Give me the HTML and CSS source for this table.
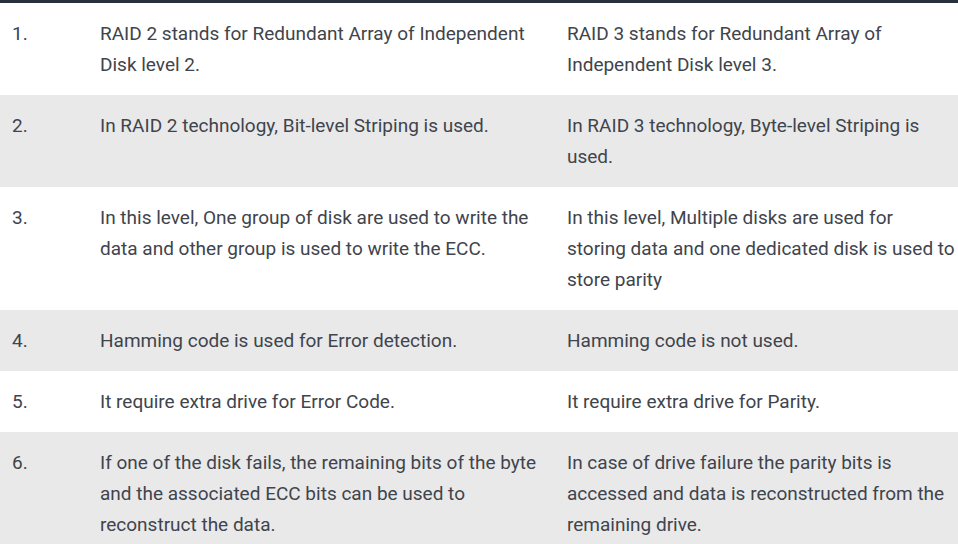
FILE: index.html
```html
<!DOCTYPE html>
<html>
<head>
<meta charset="utf-8">
<link rel="stylesheet" href="styles.css">
</head>
<body>
<table class="cmp">
  <colgroup>
    <col class="c-num">
    <col class="c-a">
    <col class="c-b">
  </colgroup>
  <tbody>
    <tr><td>1.</td><td>RAID 2 stands for Redundant Array of Independent Disk level 2.</td><td>RAID 3 stands for Redundant Array of Independent Disk level 3.</td></tr>
    <tr><td>2.</td><td>In RAID 2 technology, Bit-level Striping is used.</td><td>In RAID 3 technology, Byte-level Striping is used.</td></tr>
    <tr><td>3.</td><td>In this level, One group of disk are used to write the data and other group is used to write the ECC.</td><td>In this level, Multiple disks are used for storing&nbsp;data and one dedicated disk is used to store parity</td></tr>
    <tr><td>4.</td><td>Hamming code is used for Error detection.</td><td>Hamming code is not used.</td></tr>
    <tr><td>5.</td><td>It require extra drive for Error Code.</td><td>It require extra drive for Parity.</td></tr>
    <tr><td>6.</td><td>If one of the disk fails, the remaining bits of the byte and the associated ECC bits can be used to reconstruct the data.</td><td>In case of drive failure the parity bits is accessed and data is reconstructed from the remaining drive.</td></tr>
  </tbody>
</table>
</body>
</html>
```
FILE: styles.css
```css
html, body {
  margin: 0;
  padding: 0;
  background: #ffffff;
}
.cmp {
  width: 958px;
  border-collapse: collapse;
  border-top: 3px solid #27313b;
  table-layout: fixed;
  font-family: Roboto, "Liberation Sans", sans-serif;
  font-size: 19px;
  line-height: 31px;
  color: #40444c;
}
.c-num { width: 88px; }
.c-a { width: 467px; }
.c-b { width: 403px; }
.cmp td {
  padding: 15px 1px 15px 12px;
  vertical-align: top;
  text-align: left;
}
.cmp tr:nth-child(even) td {
  background: #e9e9ea;
}
```
